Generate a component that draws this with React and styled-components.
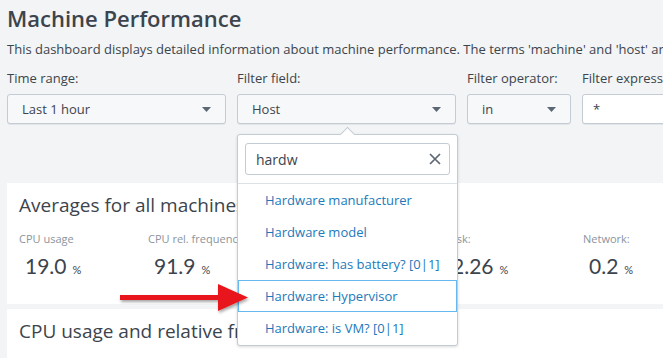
import React from "react";
import styled, { createGlobalStyle } from "styled-components";

const GlobalStyle = createGlobalStyle`
  html, body {
    margin: 0;
    padding: 0;
    background: #f2f4f5;
    font-family: "Open Sans", "Lato", sans-serif;
    color: #3c444d;
    overflow: hidden;
  }
`;

const controls = [
  { label: "Time range:", value: "Last 1 hour", width: 219, select: true },
  { label: "Filter field:", value: "Host", width: 219, select: true, open: true },
  { label: "Filter operator:", value: "in", width: 104, select: true },
  { label: "Filter expression:", value: "*", width: 200 },
];

const options = [
  "Hardware manufacturer",
  "Hardware model",
  "Hardware: has battery? [0|1]",
  "Hardware: Hypervisor",
  "Hardware: is VM? [0|1]",
];

const stats = [
  { label: "CPU usage", value: "19.0" },
  { label: "CPU rel. frequency", value: "91.9" },
  { label: "Memory:", value: "44.1" },
  { label: "Disk:", value: "2.26" },
  { label: "Network:", value: "0.2" },
];

const Caret = () => (
  <svg width="9" height="5" viewBox="0 0 9 5">
    <path d="M0 0 L9 0 L4.5 5 Z" fill="#5c6773" />
  </svg>
);

const CloseIcon = () => (
  <svg width="12" height="12" viewBox="0 0 12 12">
    <path d="M1 1 L11 11 M11 1 L1 11" stroke="#5c6773" strokeWidth="1.7" />
  </svg>
);

const Arrow = () => (
  <ArrowSvg width="140" height="40" viewBox="0 0 140 40">
    <defs>
      <filter id="sh" x="-10%" y="-30%" width="130%" height="180%">
        <feDropShadow dx="1" dy="2" stdDeviation="1.5" floodColor="#000" floodOpacity="0.35" />
      </filter>
    </defs>
    <g filter="url(#sh)">
      <rect x="4" y="15" width="102" height="5" fill="#e8191a" />
      <path d="M102 4 L132 17.5 L102 31 Z" fill="#e8191a" />
    </g>
  </ArrowSvg>
);

export default function App() {
  return (
    <>
      <GlobalStyle />
      <Page>
        <Header>
          <Title>Machine Performance</Title>
          <Description>
            This dashboard displays detailed information about machine performance. The terms 'machine' and 'host' are used interchangeably.
          </Description>
          <Controls>
            {controls.map((c) => (
              <Control key={c.label} width={c.width}>
                <Label>{c.label}</Label>
                <Field select={c.select}>
                  <span>{c.value}</span>
                  {c.select && <Caret />}
                </Field>
                {c.open && (
                  <Popup>
                    <PopupCaret />
                    <SearchBox>
                      <span>hardw</span>
                      <CloseIcon />
                    </SearchBox>
                    <OptionList>
                      {options.map((o) => (
                        <Option key={o} active={o === "Hardware: Hypervisor"}>
                          {o}
                        </Option>
                      ))}
                    </OptionList>
                  </Popup>
                )}
              </Control>
            ))}
          </Controls>
        </Header>
        <Panel first>
          <PanelTitle>Averages for all machines</PanelTitle>
          <StatGrid>
            {stats.map((s) => (
              <Stat key={s.label}>
                <StatLabel>{s.label}</StatLabel>
                <StatValue>
                  {s.value}
                  <Unit>%</Unit>
                </StatValue>
              </Stat>
            ))}
          </StatGrid>
        </Panel>
        <Panel>
          <PanelTitle>CPU usage and relative frequency</PanelTitle>
        </Panel>
        <Arrow />
      </Page>
    </>
  );
}

const Page = styled.div`
  position: relative;
  width: 663px;
  height: 358px;
  overflow: hidden;
`;

const Header = styled.div`
  padding: 0 0 0 7px;
  position: relative;
  z-index: 2;
`;

const Title = styled.h1`
  margin: 0;
  padding-top: 3px;
  font-size: 22px;
  line-height: 30px;
  font-weight: 600;
  color: #3c444d;
  white-space: nowrap;
`;

const Description = styled.p`
  margin: 8px 0 0;
  font-size: 13px;
  line-height: 16px;
  white-space: nowrap;
`;

const Controls = styled.div`
  display: flex;
  gap: 11px;
  margin-top: 13px;
  height: 56px;
`;

const Control = styled.div`
  position: relative;
  flex: 0 0 ${(p) => p.width}px;
  display: flex;
  flex-direction: column;
`;

const Label = styled.div`
  font-size: 13px;
  line-height: 16px;
  white-space: nowrap;
  margin-bottom: 8px;
`;

const Field = styled.div`
  box-sizing: border-box;
  height: 30px;
  display: flex;
  align-items: center;
  justify-content: space-between;
  padding: 0 14px 0 ${(p) => (p.select ? 14 : 10)}px;
  font-size: 13px;
  border: 1px solid #c3cbd4;
  border-radius: 3px;
  background: ${(p) => (p.select ? "#f7f8fa" : "#fff")};
  box-shadow: 0 1px 0 rgba(0, 0, 0, 0.06);
`;

const Popup = styled.div`
  position: absolute;
  top: 64px;
  left: 0;
  box-sizing: border-box;
  width: 221px;
  background: #fff;
  border: 1px solid #c3cbd4;
  border-radius: 3px;
  box-shadow: 0 1px 3px rgba(0, 0, 0, 0.15);
`;

const PopupCaret = styled.div`
  position: absolute;
  top: -6px;
  left: 104px;
  width: 10px;
  height: 10px;
  background: #fff;
  border-left: 1px solid #c3cbd4;
  border-top: 1px solid #c3cbd4;
  transform: rotate(45deg);
`;

const SearchBox = styled.div`
  box-sizing: border-box;
  margin: 8px 7px 8px 7px;
  height: 32px;
  display: flex;
  align-items: center;
  justify-content: space-between;
  padding: 0 8px 0 10px;
  border: 1px solid #c3cbd4;
  border-radius: 3px;
  font-size: 14px;
  background: #fff;
  position: relative;
`;

const OptionList = styled.div`
  border-top: 1px solid #dde2e7;
  padding-bottom: 1px;
`;

const Option = styled.div`
  box-sizing: border-box;
  height: 32px;
  display: flex;
  align-items: center;
  padding-left: 26px;
  font-size: 13px;
  color: #1d79ba;
  white-space: nowrap;
  border: 1px solid ${(p) => (p.active ? "#66b9ef" : "transparent")};
`;

const Panel = styled.section`
  margin: ${(p) => (p.first ? "57px" : "5px")} 0 0 7px;
  background: #fff;
  padding: 9px 12px 0;
  height: ${(p) => (p.first ? "112px" : "60px")};
`;

const PanelTitle = styled.h2`
  margin: 0;
  font-size: 19px;
  line-height: 26px;
  font-weight: 400;
  color: #3c444d;
  white-space: nowrap;
`;

const StatGrid = styled.div`
  display: grid;
  grid-template-columns: 129px 129px 169px 137px 1fr;
  margin-top: 14px;
`;

const Stat = styled.div`
  display: flex;
  flex-direction: column;
`;

const StatLabel = styled.div`
  font-size: 11px;
  line-height: 14px;
  color: #8b949d;
  white-space: nowrap;
`;

const StatValue = styled.div`
  margin-top: 7px;
  padding-left: 6px;
  font-family: "Lato", sans-serif;
  font-size: 21px;
  line-height: 26px;
  color: #3c444d;
  white-space: nowrap;
`;

const Unit = styled.span`
  font-size: 11px;
  margin-left: 6px;
`;

const ArrowSvg = styled.svg`
  position: absolute;
  left: 116px;
  top: 280px;
  z-index: 3;
`;
